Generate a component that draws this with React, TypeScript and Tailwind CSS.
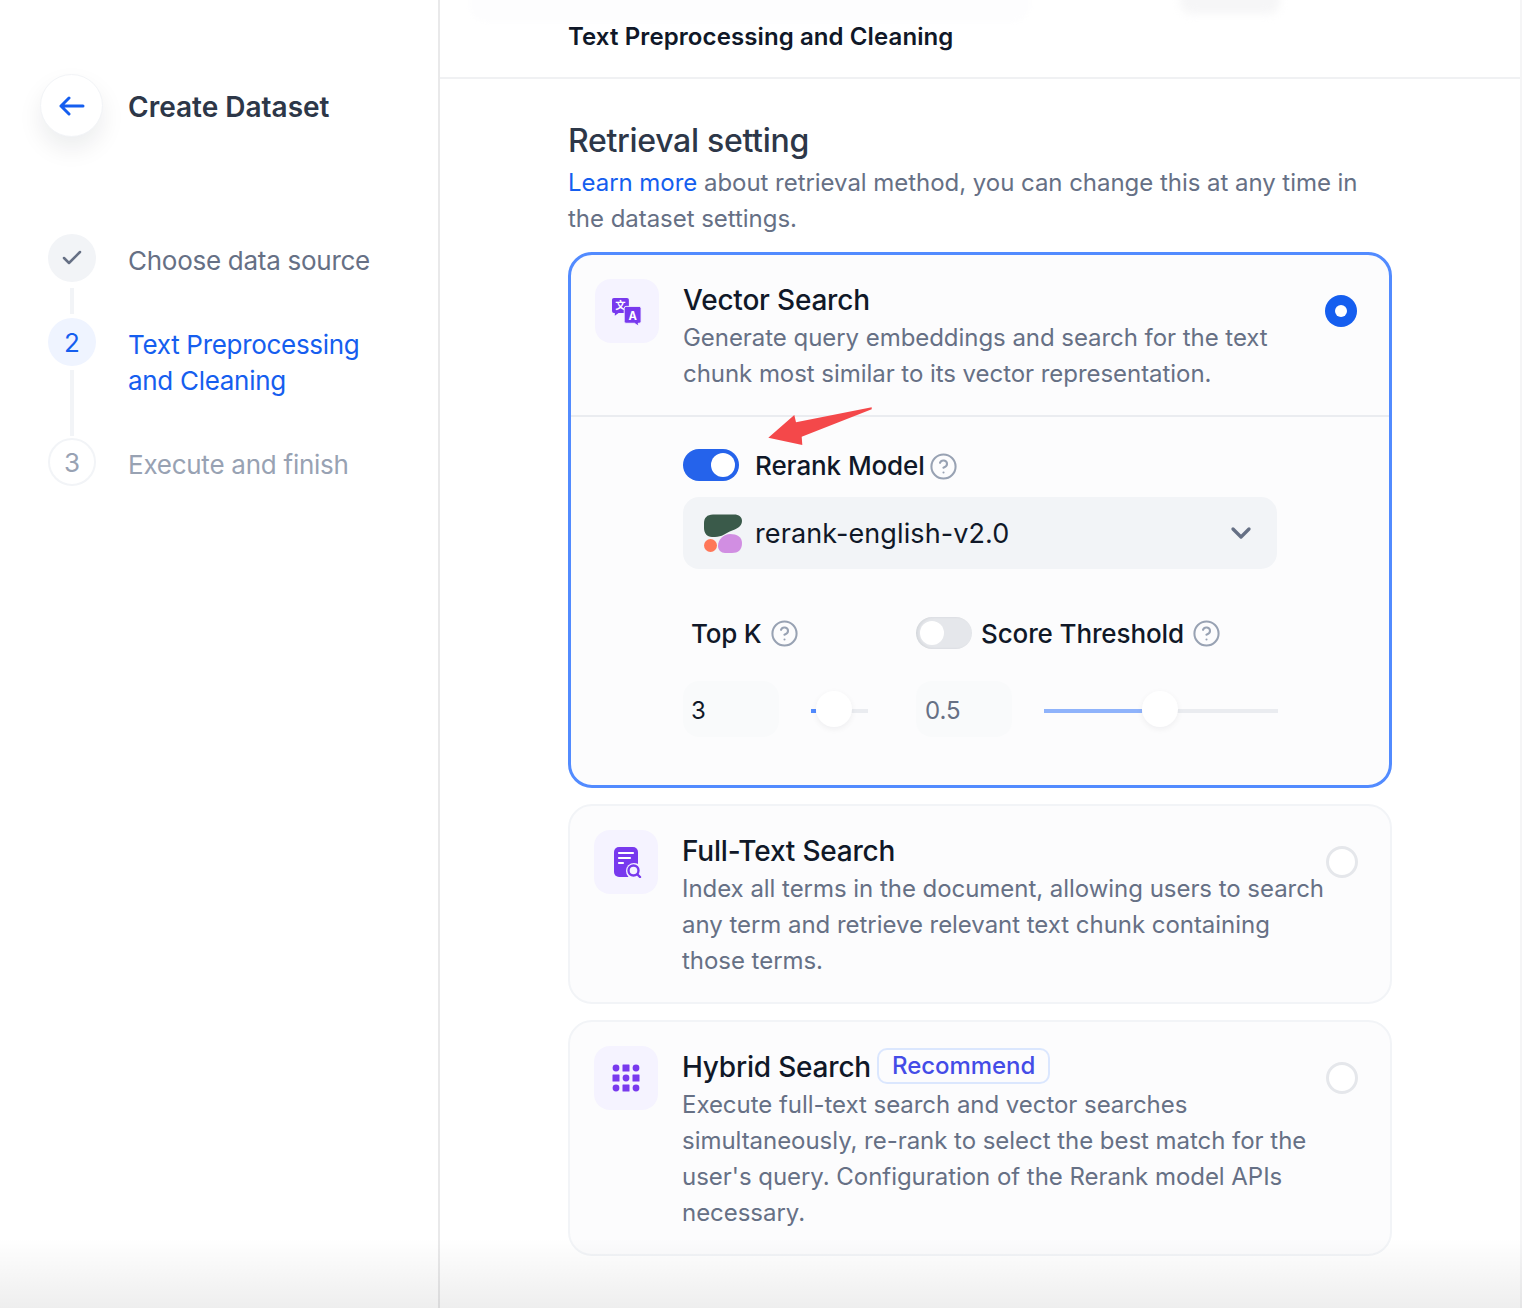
import { Check, ChevronDown, CircleHelp } from 'lucide-react'

function Help() {
  return <CircleHelp className="w-[29px] h-[29px] -m-[1.5px] text-[#98a2b3] shrink-0" strokeWidth={1.7} />
}

function Radio({ on }: { on?: boolean }) {
  if (on) {
    return (
      <div className="w-8 h-8 rounded-full bg-[#155eef] flex items-center justify-center shrink-0">
        <div className="w-3 h-3 rounded-full bg-white" />
      </div>
    )
  }
  return <div className="w-8 h-8 rounded-full border-[3px] border-[#e5e7eb] bg-white shrink-0" />
}

function IconBox({ children }: { children: React.ReactNode }) {
  return (
    <div className="w-16 h-16 rounded-2xl bg-[#f5f3ff] flex items-center justify-center shrink-0">
      {children}
    </div>
  )
}

function TranslateIcon() {
  return (
    <svg width="30" height="30" viewBox="0 0 32 32" className="mt-0.5">
      <path d="M2 1h14a2 2 0 0 1 2 2v12a2 2 0 0 1-2 2H7l-4 3v-3H2a2 2 0 0 1-2-2V3a2 2 0 0 1 2-2z" fill="#7839ee" />
      <text x="9" y="13" textAnchor="middle" fontSize="11" fill="#fff" fontWeight="700" fontFamily="'Noto Sans CJK SC', sans-serif">文</text>
      <path d="M15 10h14a2 2 0 0 1 2 2v14a2 2 0 0 1-2 2h-1v3l-4-3h-9a2 2 0 0 1-2-2V12a2 2 0 0 1 2-2z" fill="#7839ee" stroke="#f5f3ff" strokeWidth="1" />
      <text x="22" y="24" textAnchor="middle" fontSize="12" fill="#fff" fontWeight="700" fontFamily="Inter, sans-serif">A</text>
    </svg>
  )
}

function DocSearchIcon() {
  return (
    <svg width="32" height="32" viewBox="0 0 32 32">
      <rect x="4" y="1" width="24" height="30" rx="5" fill="#7839ee" />
      <path d="M9 7h14M9 12h11M9 17h4" stroke="#fff" strokeWidth="2.2" strokeLinecap="round" />
      <circle cx="24" cy="25" r="8" fill="#f5f3ff" />
      <circle cx="23.500" cy="24.500" r="5" fill="none" stroke="#7839ee" strokeWidth="2.4" />
      <path d="M27.500 28.500l2.500 2.500" stroke="#7839ee" strokeWidth="2.4" strokeLinecap="round" />
    </svg>
  )
}

function GridIcon() {
  return (
    <svg width="28" height="28" viewBox="0 0 28 28" fill="#7839ee">
      <circle cx="4" cy="4" r="3.4" />
      <rect x="10.5" y="0.5" width="7" height="7" rx="0.5" />
      <circle cx="24" cy="4" r="3.4" />
      <rect x="0.5" y="10.5" width="7" height="7" rx="0.5" />
      <circle cx="14" cy="14" r="3.4" />
      <rect x="20.5" y="10.5" width="7" height="7" rx="0.5" />
      <circle cx="4" cy="24" r="3.4" />
      <rect x="10.5" y="20.5" width="7" height="7" rx="0.5" />
      <circle cx="24" cy="24" r="3.4" />
    </svg>
  )
}

function CohereLogo() {
  return (
    <svg width="39" height="39" viewBox="0 0 39 39" className="shrink-0">
      <path d="M10 .5H31C36 .5 39 3 39 7C39 13 33 15 28 17C23 19 19 23 12 23H9C4 23 1 19 1 14V9C1 4 4 .5 10 .5z" fill="#3a5a4a" />
      <circle cx="7.500" cy="31.500" r="6.500" fill="#ff7759" />
      <path d="M27 20C34 20 39 23 39 29C39 36 35 39 29 39H22C18 39 15 36 15 32C15 25 21 20 27 20z" fill="#d18ee2" />
    </svg>
  )
}

function Slider({ width, fill, thumb, light }: { width: string; fill: string; thumb: string; light?: boolean }) {
  return (
    <div className={`relative h-1 mt-1 bg-[#eaecf0] ${width}`}>
      <div className={`absolute left-0 top-0 h-1 ${fill} ${light ? 'bg-[#8fb3fb]' : 'bg-[#528bff]'}`} />
      <div className={`absolute -top-[18px] w-9 h-9 rounded-full bg-white shadow-[0_2px_6px_rgba(16,24,40,0.06)] ${thumb}`} />
    </div>
  )
}

export default function App() {
  return (
    <div className="relative flex h-[1308px] w-[1522px] overflow-hidden bg-white font-[Inter,sans-serif]">
      {/* Sidebar */}
      <aside className="w-[440px] shrink-0 border-r-2 border-[#e9e9ea] pt-[74px] pl-[40px]">
        <div className="flex items-center gap-[25px]">
          <div className="w-[63px] h-[63px] rounded-full bg-white border border-[#f2f4f7] shadow-[0_12px_24px_rgba(16,24,40,0.08)] flex items-center justify-center">
            <svg width="26" height="20" viewBox="0 0 26 20" fill="none" stroke="#155eef" strokeWidth="3" strokeLinecap="round" strokeLinejoin="round">
              <path d="M10 2L2 10L10 18M2 10H24" />
            </svg>
          </div>
          <h1 className="mt-0.5 text-[28px] leading-9 font-semibold text-[#2d3748]">Create Dataset</h1>
        </div>

        <div className="mt-[97px] ml-[8px] flex flex-col">
          <div className="flex gap-8">
            <div className="flex flex-col items-center w-12">
              <div className="w-12 h-12 rounded-full bg-[#f2f4f7] flex items-center justify-center">
                <Check className="w-6 h-6 text-[#667085]" strokeWidth={2.5} />
              </div>
              <div className="w-1 h-[26px] mt-1.5 mb-1 bg-[#f2f4f7]" />
            </div>
            <div className="mt-[9px] text-[26px] leading-9 tracking-[-0.27px] text-[#667085]">Choose data source</div>
          </div>
          <div className="flex gap-8">
            <div className="flex flex-col items-center w-12">
              <div className="w-12 h-12 rounded-full bg-[#eff4ff] text-[#155eef] text-[26px] flex items-center justify-center">2</div>
              <div className="w-1 h-[66px] mt-1 mb-0.5 bg-[#f2f4f7]" />
            </div>
            <div className="mt-[9px] text-[26px] leading-9 tracking-[-0.3px] text-[#155eef]">Text Preprocessing<br />and Cleaning</div>
          </div>
          <div className="flex gap-8">
            <div className="w-12 h-12 rounded-full border-2 border-[#f2f4f7] text-[#98a2b3] text-[26px] flex items-center justify-center">3</div>
            <div className="mt-[9px] text-[26px] leading-9 tracking-[-0.25px] text-[#98a2b3]">Execute and finish</div>
          </div>
        </div>
      </aside>

      {/* Main */}
      <main className="flex-1 border-r-2 border-[#f5f5f6]">
        <div className="h-[79px] border-b-2 border-[#f0f1f3] pl-[128px] pt-[19px]">
          <div className="text-[24px] leading-9 font-semibold tracking-[0.1px] text-[#101828]">Text Preprocessing and Cleaning</div>
        </div>

        <div className="pl-[128px] pt-[42px] w-[952px]">
          <h2 className="text-[32px] leading-10 font-medium tracking-[-0.3px] text-[#2d3748]">Retrieval setting</h2>
          <p className="mt-1 w-[800px] text-[24px] leading-9 tracking-[-0.04px] text-[#667085]">
            <span className="text-[#155eef]">Learn more</span> about retrieval method, you can change this at any time in the dataset settings.
          </p>

          {/* Vector Search */}
          <div className="mt-[15px] h-[536px] rounded-3xl border-[3px] border-[#528bff] bg-[#fcfcfd]">
            <div className="h-[162px] border-b-2 border-[#eaecf0] flex pl-6 pt-6">
              <IconBox><TranslateIcon /></IconBox>
              <div className="ml-6 w-[612px]">
                <div className="text-[28px] leading-10 font-medium tracking-[-0.2px] text-[#101828] mt-px">Vector Search</div>
                <p className="text-[24px] leading-9 tracking-[-0.05px] text-[#667085]">Generate query embeddings and search for the text chunk most similar to its vector representation.</p>
              </div>
              <div className="ml-[30px] mt-4"><Radio on /></div>
            </div>

            <div className="pl-28">
              <div className="flex items-center mt-8 h-8">
                <div className="w-14 h-8 rounded-full bg-[#2563eb] flex items-center justify-end pr-1">
                  <div className="w-6 h-6 rounded-full bg-white" />
                </div>
                <span className="ml-4 text-[26px] leading-9 mt-0.5 font-medium tracking-[-0.1px] text-[#101828]">Rerank Model</span>
                <span className="ml-1.5 mt-0.5 flex"><Help /></span>
              </div>

              <div className="mt-4 w-[594px] h-[72px] rounded-2xl bg-[#f2f4f7] flex items-center pl-5 pr-5">
                <CohereLogo />
                <span className="ml-[13px] mt-0.5 flex-1 text-[27px] tracking-[0.1px] text-[#101828]">rerank-english-v2.0</span>
                <ChevronDown className="w-8 h-8 text-[#667085]" strokeWidth={2.5} />
              </div>

              <div className="mt-12 flex items-center h-8">
                <div className="w-[233px] pl-2 flex items-center gap-2.5">
                  <span className="text-[26px] leading-9 mt-0.5 font-medium tracking-[-0.2px] text-[#101828]">Top K</span>
                  <Help />
                </div>
                <div className="w-14 h-8 rounded-full bg-[#e5e7eb] flex items-center pl-1 shadow-[inset_2px_0_3px_rgba(16,24,40,0.08)]">
                  <div className="w-6 h-6 rounded-full bg-white" />
                </div>
                <span className="ml-[9px] mt-0.5 text-[26px] leading-9 font-medium tracking-[-0.12px] text-[#101828]">Score Threshold</span>
                <span className="ml-2.5 flex"><Help /></span>
              </div>

              <div className="mt-8 flex items-center">
                <div className="w-24 h-14 rounded-2xl bg-[#f9fafb] pl-2 pt-1 flex items-center text-[24px] text-[#101828]">3</div>
                <Slider width="w-[57px] ml-8" fill="w-[5px]" thumb="left-[5px]" />
                <div className="ml-12 w-24 h-14 rounded-2xl bg-[#f9fafb] pl-[9px] pt-1 flex items-center text-[24px] text-[#667085]">0.5</div>
                <Slider width="w-[234px] ml-8" fill="w-[98px]" thumb="left-[98px]" light />
              </div>
            </div>
          </div>

          {/* Full-Text Search */}
          <div className="mt-4 h-[200px] rounded-3xl border-2 border-[#f2f4f7] bg-[#fcfcfd] flex pl-6 pt-6">
            <IconBox><DocSearchIcon /></IconBox>
            <div className="ml-6 w-[644px]">
              <div className="text-[28px] leading-10 font-medium tracking-[-0.2px] text-[#101828] mt-px">Full-Text Search</div>
              <p className="text-[24px] leading-9 tracking-[-0.04px] text-[#667085]">Index all terms in the document, allowing users to search any term and retrieve relevant text chunk containing those terms.</p>
            </div>
            <div className="mt-4"><Radio /></div>
          </div>

          {/* Hybrid Search */}
          <div className="mt-4 h-[236px] rounded-3xl border-2 border-[#f2f4f7] bg-[#fcfcfd] flex pl-6 pt-6">
            <IconBox><GridIcon /></IconBox>
            <div className="ml-6 w-[644px]">
              <div className="flex items-center mt-px h-10">
                <span className="text-[28px] leading-10 font-medium tracking-[-0.2px] text-[#101828]">Hybrid Search</span>
                <span className="ml-1.5 -mt-0.5 h-9 px-[13px] rounded-[10px] border-2 border-[#dbe7fe] flex items-center text-[24px] font-medium tracking-[-0.05px] text-[#444ce7]">Recommend</span>
              </div>
              <p className="text-[24px] leading-9 tracking-[-0.04px] text-[#667085]">Execute full-text search and vector searches simultaneously, re-rank to select the best match for the user's query. Configuration of the Rerank model APIs necessary.</p>
            </div>
            <div className="mt-4"><Radio /></div>
          </div>
        </div>
      </main>

      {/* faded content scrolled behind the header */}
      <div className="absolute left-[470px] -top-[18px] w-[560px] h-10 rounded-2xl bg-[#fdfdfe] blur-[2px]" />
      <div className="absolute left-[1180px] -top-[14px] w-[100px] h-7 rounded-xl bg-[#f6f6f7] blur-[4px]" />

      {/* red annotation arrow */}
      <svg className="absolute left-[760px] top-[400px]" width="120" height="50" viewBox="0 0 120 50">
        <polygon points="8.300,37.700 34.300,15 36,22.300 111.700,7.300 111.700,9.300 41.700,36.700 42.300,45" fill="#f4484a" />
      </svg>

      {/* bottom fade */}
      <div className="absolute left-0 right-0 bottom-0 h-[70px] bg-gradient-to-b from-transparent to-[rgba(0,0,0,0.065)] pointer-events-none" />
    </div>
  )
}
